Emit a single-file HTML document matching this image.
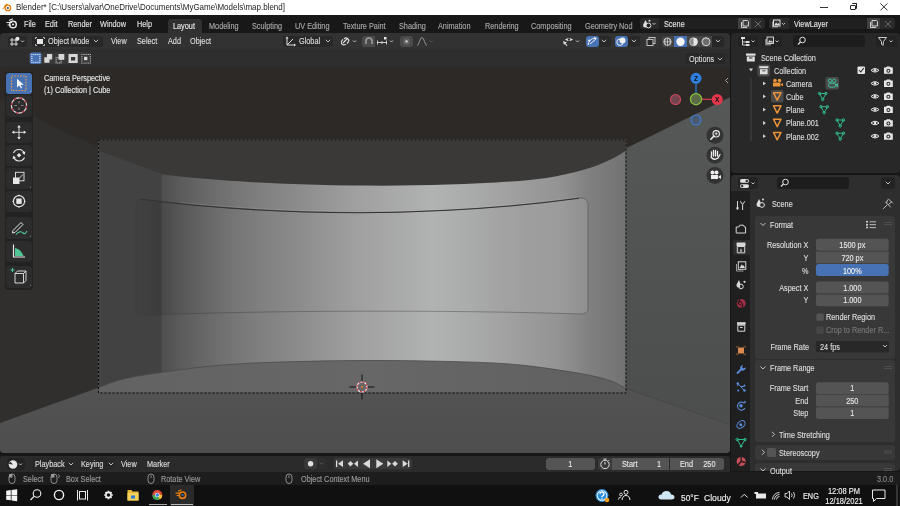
<!DOCTYPE html>
<html><head><meta charset="utf-8">
<style>
*{margin:0;padding:0;box-sizing:border-box}
html,body{width:900px;height:506px;overflow:hidden;background:#161616;font-family:"Liberation Sans",sans-serif;position:relative}
.a{position:absolute}
.t{position:absolute;white-space:nowrap;line-height:1;font-size:7.3px;color:#dcdcdc;-webkit-text-stroke:0.12px currentColor;will-change:transform;transform:translateY(0.5px) scaleY(1.12);transform-origin:0 0.49em}
.c{text-align:center}
.r{text-align:right}
svg{position:absolute;overflow:visible}
</style></head><body>

<!-- title bar -->
<div class="a" style="left:0;top:0;width:900px;height:15px;background:#ffffff"></div>
<!-- top bar -->
<div class="a" style="left:0;top:15px;width:900px;height:18px;background:#181818"></div>

<!-- title bar content -->
<svg style="left:0;top:0" width="15" height="15" viewBox="0 0 15 15">
<path d="M6.6,3.4 L8.6,5.2 L6.4,7.4 L5.4,7.2 L2.4,9.6 L2.1,8.9 L4.6,6.4 L3.6,6.3 Z" fill="#ec8a2a"/>
<circle cx="7.9" cy="7.9" r="2.7" fill="#fff" stroke="#e87d0d" stroke-width="1.3"/>
<circle cx="7.9" cy="7.9" r="1" fill="#3a3a3a"/>
</svg>
<div class="t" style="left:15.6px;top:3.2px;font-size:8px;color:#1a1a1a;-webkit-text-stroke:0">Blender* [C:\Users\alvar\OneDrive\Documents\MyGame\Models\map.blend]</div>
<div class="a" style="left:820px;top:6.5px;width:7.5px;height:1px;background:#333"></div>
<div class="a" style="left:850px;top:4.5px;width:5.5px;height:5.5px;border:1px solid #222;border-radius:1px"></div>
<div class="a" style="left:851.5px;top:3px;width:5.5px;height:5.5px;border-top:1px solid #222;border-right:1px solid #222;border-radius:1px"></div>
<svg style="left:880px;top:3px" width="8" height="8" viewBox="0 0 8 8"><path d="M0.4,0.4 L7.4,7.4 M7.4,0.4 L0.4,7.4" stroke="#222" stroke-width="0.9"/></svg>

<!-- top bar content -->
<svg style="left:6px;top:18px" width="12" height="12" viewBox="0 0 12 12">
<circle cx="7" cy="6.5" r="3.3" fill="none" stroke="#e6e6e6" stroke-width="1.5"/>
<circle cx="7" cy="6.5" r="1.1" fill="#e6e6e6"/>
<path d="M1,4.5 L5.5,4.5 M2,7 L4.5,7 M3.5,2.3 L6.5,1" stroke="#e6e6e6" stroke-width="1.2" stroke-linecap="round"/>
</svg>
<div class="t" style="left:23.5px;top:19.8px;color:#e0e0e0">File</div>
<div class="t" style="left:44.8px;top:19.8px;color:#e0e0e0">Edit</div>
<div class="t" style="left:67.5px;top:19.8px;color:#e0e0e0">Render</div>
<div class="t" style="left:100px;top:19.8px;color:#e0e0e0">Window</div>
<div class="t" style="left:136.5px;top:19.8px;color:#e0e0e0">Help</div>
<div class="a" style="left:168px;top:18.5px;width:34px;height:14.5px;background:#303030;border-radius:3px 3px 0 0"></div>
<div class="t" style="left:173.3px;top:22px;color:#e6e6e6">Layout</div>
<div class="t" style="left:209.3px;top:22px;color:#a8a8a8">Modeling</div>
<div class="t" style="left:252px;top:22px;color:#a8a8a8">Sculpting</div>
<div class="t" style="left:295px;top:22px;color:#a8a8a8">UV Editing</div>
<div class="t" style="left:342.7px;top:22px;color:#a8a8a8">Texture Paint</div>
<div class="t" style="left:398.7px;top:22px;color:#a8a8a8">Shading</div>
<div class="t" style="left:437.5px;top:22px;color:#a8a8a8">Animation</div>
<div class="t" style="left:484.7px;top:22px;color:#a8a8a8">Rendering</div>
<div class="t" style="left:530.8px;top:22px;color:#a8a8a8">Compositing</div>
<div class="t" style="left:584.7px;top:22px;color:#a8a8a8">Geometry Nod</div>
<!-- scene selector -->
<div class="a" style="left:640px;top:18px;width:19px;height:11px;background:#2a2a2a;border-radius:3px 0 0 3px"></div>
<svg style="left:642px;top:18.5px" width="15" height="10" viewBox="0 0 15 10">
<path d="M3.5,1 L1,6 Q1,8.5 3.5,8.5 Q6,8.5 6,6 Z" fill="#e0e0e0"/>
<circle cx="6.5" cy="6.5" r="2.4" fill="#232323" stroke="#e0e0e0" stroke-width="1"/>
<circle cx="7.5" cy="1.8" r="1" fill="#e0e0e0"/>
<path d="M10.5,4 L12,5.5 L13.5,4" fill="none" stroke="#d0d0d0" stroke-width="0.9"/>
</svg>
<div class="a" style="left:659px;top:18px;width:79px;height:11px;background:#202020"></div>
<div class="t" style="left:664px;top:20px;color:#e0e0e0">Scene</div>
<div class="a" style="left:738px;top:18px;width:13px;height:11px;background:#404040"></div>
<svg style="left:740px;top:19px" width="10" height="10" viewBox="0 0 10 10"><path d="M3,1.5 L7.5,1.5 L8.5,2.5 L8.5,7 L3,7 Z M1.5,3 L1.5,8.5 L7,8.5" fill="none" stroke="#cfcfcf" stroke-width="1"/></svg>
<div class="a" style="left:751px;top:18px;width:14px;height:11px;background:#2a2a2a;border-radius:0 3px 3px 0"></div>
<svg style="left:754px;top:20px" width="8" height="8" viewBox="0 0 8 8"><path d="M1,1 L7,7 M7,1 L1,7" stroke="#6a6a6a" stroke-width="1"/></svg>
<!-- view layer -->
<div class="a" style="left:769px;top:18px;width:20px;height:11px;background:#2a2a2a;border-radius:3px 0 0 3px"></div>
<svg style="left:771px;top:18.5px" width="16" height="10" viewBox="0 0 16 10">
<rect x="1" y="2.5" width="6" height="6" fill="#8a8a8a"/>
<rect x="2.5" y="1" width="6.5" height="6" fill="#333" stroke="#e0e0e0" stroke-width="1"/>
<path d="M3.5,6 L5,3.5 L6.5,5 L7.5,4 L8.5,6 Z" fill="#e0e0e0"/>
<path d="M11,4 L12.5,5.5 L14,4" fill="none" stroke="#d0d0d0" stroke-width="0.9"/>
</svg>
<div class="a" style="left:789px;top:18px;width:78px;height:11px;background:#202020"></div>
<div class="t" style="left:794px;top:20px;color:#e0e0e0">ViewLayer</div>
<div class="a" style="left:867px;top:18px;width:13px;height:11px;background:#404040"></div>
<svg style="left:869px;top:19px" width="10" height="10" viewBox="0 0 10 10"><path d="M3,1.5 L7.5,1.5 L8.5,2.5 L8.5,7 L3,7 Z M1.5,3 L1.5,8.5 L7,8.5" fill="none" stroke="#cfcfcf" stroke-width="1"/></svg>
<div class="a" style="left:880px;top:18px;width:15px;height:11px;background:#2a2a2a;border-radius:0 3px 3px 0"></div>
<svg style="left:884px;top:20px" width="8" height="8" viewBox="0 0 8 8"><path d="M1,1 L7,7 M7,1 L1,7" stroke="#6a6a6a" stroke-width="1"/></svg>

<!-- viewport area -->
<div class="a" id="vp" style="left:0;top:33px;width:730px;height:420px;background:#323232;border-radius:4px;overflow:hidden">
</div>

<!-- 3D viewport scene -->
<svg style="left:0;top:0" width="900" height="506" viewBox="0 0 900 506">
<defs>
<clipPath id="vpc"><rect x="0" y="66" width="730" height="387" rx="4"/></clipPath>
<clipPath id="frc"><rect x="99" y="140.5" width="527" height="252.5"/></clipPath>
<linearGradient id="wallg" gradientUnits="userSpaceOnUse" x1="99" y1="0" x2="626" y2="0">
<stop offset="0" stop-color="#444444"/>
<stop offset="0.118" stop-color="#4e4e4e"/>
<stop offset="0.160" stop-color="#5d5d5d"/>
<stop offset="0.214" stop-color="#6b6b6b"/>
<stop offset="0.287" stop-color="#7c7c7c"/>
<stop offset="0.38" stop-color="#8c8c8c"/>
<stop offset="0.476" stop-color="#9e9e9e"/>
<stop offset="0.632" stop-color="#b1b2b2"/>
<stop offset="0.704" stop-color="#aaabab"/>
<stop offset="0.795" stop-color="#9e9e9e"/>
<stop offset="0.875" stop-color="#939393"/>
<stop offset="0.93" stop-color="#808080"/>
<stop offset="1" stop-color="#727272"/>
</linearGradient>
<linearGradient id="pshade" gradientUnits="userSpaceOnUse" x1="136" y1="0" x2="588" y2="0">
<stop offset="0" stop-color="#000" stop-opacity="0.03"/>
<stop offset="0.055" stop-color="#000" stop-opacity="0.08"/>
<stop offset="0.14" stop-color="#000" stop-opacity="0.03"/>
<stop offset="0.2" stop-color="#000" stop-opacity="0"/>
<stop offset="0.8" stop-color="#fff" stop-opacity="0"/>
<stop offset="1" stop-color="#fff" stop-opacity="0.11"/>
</linearGradient>
<linearGradient id="finner" gradientUnits="userSpaceOnUse" x1="99" y1="0" x2="626" y2="0"><stop offset="0" stop-color="#626262"/><stop offset="0.5" stop-color="#676767"/><stop offset="1" stop-color="#606060"/></linearGradient>
<linearGradient id="rwall" gradientUnits="userSpaceOnUse" x1="0" y1="100" x2="0" y2="425">
<stop offset="0" stop-color="#565757"/><stop offset="1" stop-color="#4c4d4d"/>
</linearGradient>
<linearGradient id="floorg" gradientUnits="userSpaceOnUse" x1="0" y1="360" x2="0" y2="453">
<stop offset="0" stop-color="#555555"/><stop offset="1" stop-color="#4e4e4e"/>
</linearGradient>
</defs>
<g clip-path="url(#vpc)">
<rect x="0" y="66" width="730" height="387" fill="#2c2927"/>
<path d="M0,99 C20,108 40,121 60,130 L99,147 L161.5,174.3 L164,380 L98,389 L0,423 Z" fill="#312f2e"/>
<path d="M625.5,148.6 L731,96.8 L731,426 L625.5,388.6 Z" fill="url(#rwall)"/>
<path d="M0,423 L99,387.5 C102.5,386.2 111.3,382.2 120,380 C128.7,377.8 135.7,376.3 151,374 C166.3,371.7 191.7,367.9 212,366 C232.3,364.1 247.5,363.2 273,362.3 C298.5,361.4 334.3,360.6 365,360.5 C395.7,360.4 431.5,361.0 457,361.7 C482.5,362.4 497.7,362.9 518,364.8 C538.3,366.7 563.7,370.7 579,373.3 C594.3,375.9 602.2,378.1 610,380.7 C617.8,383.2 623.3,387.3 626,388.6 L731,425 L731,453 L0,453 Z" fill="url(#floorg)"/>
<path d="M626,388.6 L731,425" stroke="#464646" stroke-width="0.9"/>
<g clip-path="url(#frc)">
<rect x="99" y="140" width="527" height="253" fill="#3a3938"/>
<path d="M99,151 L161.5,174.3 C250,186 420,190 530,180 C575,175 605,165 626,150.5 L626,393 L99,393 Z" fill="url(#wallg)"/>
<path d="M99,151 L161.5,174.3 L161.5,393 L99,393 Z" fill="#424242"/>
<path d="M141,199 C280,217 440,217 579,198 Q588,197 588,205 L588,309 Q588,314 580,314 C460,310 260,310 142,315.5 Q136,315.5 136,309 L136,206 Q136,199 141,199 Z" fill="url(#pshade)"/>
<path d="M99,387.5 C102.5,386.2 111.3,382.2 120,380 C128.7,377.8 135.7,376.3 151,374 C166.3,371.7 191.7,367.9 212,366 C232.3,364.1 247.5,363.2 273,362.3 C298.5,361.4 334.3,360.6 365,360.5 C395.7,360.4 431.5,361.0 457,361.7 C482.5,362.4 497.7,362.9 518,364.8 C538.3,366.7 563.7,370.7 579,373.3 C594.3,375.9 602.2,378.1 610,380.7 C617.8,383.2 623.3,387.3 626,388.6 L626,393 L98,393 Z" fill="url(#finner)"/>
<path d="M99,387.5 C102.5,386.2 111.3,382.2 120,380 C128.7,377.8 135.7,376.3 151,374 C166.3,371.7 191.7,367.9 212,366 C232.3,364.1 247.5,363.2 273,362.3 C298.5,361.4 334.3,360.6 365,360.5 C395.7,360.4 431.5,361.0 457,361.7 C482.5,362.4 497.7,362.9 518,364.8 C538.3,366.7 563.7,370.7 579,373.3 C594.3,375.9 602.2,378.1 610,380.7 C617.8,383.2 623.3,387.3 626,388.6" fill="none" stroke="#4a4a4a" stroke-width="0.8"/>
<!-- panel outline -->
<path d="M141,199 C280,217 440,217 579,198 Q588,197 588,205 L588,309 Q588,314 580,314 C460,310 260,310 142,315.5 Q136,315.5 136,309 L136,206 Q136,199 141,199 Z" fill="none" stroke="#3a3a3a" stroke-width="0.8" opacity="0.5"/>
<path d="M141,199.3 C280,217.3 440,217.3 579,198.3" fill="none" stroke="#333" stroke-width="1.1"/>
<path d="M180,202.5 C300,214.5 440,216 579,197" fill="none" stroke="#d8d8d8" stroke-width="0.6" opacity="0.22"/>
</g>
<!-- camera frame -->
<rect x="98.5" y="140" width="527.5" height="253" fill="none" stroke="#505050" stroke-width="1"/><rect x="98.5" y="140" width="527.5" height="253" fill="none" stroke="#0a0a0a" stroke-width="1" stroke-dasharray="2 2"/>
</g>
</svg>

<!-- 3D view header -->
<div class="a" style="left:0;top:48.5px;width:730px;height:18px;background:#2e2e2e"></div>
<div class="a" style="left:8px;top:35.5px;width:19px;height:11.5px;background:#282828;border-radius:3px"></div>
<svg style="left:9px;top:36px" width="18" height="11" viewBox="0 0 18 11">
<path d="M1,4 L9,4 M1,8 L9,8 M3,2 L3,10 M7,2 L7,10" stroke="#d8d8d8" stroke-width="1"/>
<circle cx="8.5" cy="2.8" r="2" fill="#e8e8e8"/>
<path d="M12,4.5 L13.5,6 L15,4.5" fill="none" stroke="#d0d0d0" stroke-width="0.9"/>
</svg>
<div class="a" style="left:32px;top:35.5px;width:71px;height:11.5px;background:#282828;border-radius:3px"></div>
<svg style="left:34px;top:36px" width="12" height="11" viewBox="0 0 12 11">
<path d="M1.5,3 L1.5,1.5 L3,1.5 M9,1.5 L10.5,1.5 L10.5,3 M10.5,8 L10.5,9.5 L9,9.5 M3,9.5 L1.5,9.5 L1.5,8" fill="none" stroke="#cfcfcf" stroke-width="0.9"/>
<rect x="3" y="3" width="6" height="5" fill="#e6e6e6"/>
</svg>
<div class="t" style="left:47.5px;top:37.2px">Object Mode</div>
<svg style="left:93px;top:39px" width="6" height="4" viewBox="0 0 6 4"><path d="M0.8,0.8 L3,3 L5.2,0.8" fill="none" stroke="#d0d0d0" stroke-width="0.9"/></svg>
<div class="t" style="left:110.7px;top:37.2px">View</div>
<div class="t" style="left:136.8px;top:37.2px">Select</div>
<div class="t" style="left:167.5px;top:37.2px">Add</div>
<div class="t" style="left:190px;top:37.2px">Object</div>

<div class="a" style="left:282.7px;top:35.5px;width:50.5px;height:11.5px;background:#282828;border-radius:3px"></div>
<svg style="left:285px;top:36px" width="12" height="11" viewBox="0 0 12 11">
<path d="M2,9 L2,1.5 M2,9 L10,9 M2,9 L8,3" fill="none" stroke="#e0e0e0" stroke-width="1"/>
<path d="M0.5,2.5 L2,0.5 L3.5,2.5 Z M9,7.5 L11,9 L9,10.5 Z" fill="#e0e0e0"/>
</svg>
<div class="t" style="left:299px;top:37.2px">Global</div>
<svg style="left:325px;top:39px" width="6" height="4" viewBox="0 0 6 4"><path d="M0.8,0.8 L3,3 L5.2,0.8" fill="none" stroke="#d0d0d0" stroke-width="0.9"/></svg>
<svg style="left:339px;top:36px" width="20" height="11" viewBox="0 0 20 11">
<path d="M4,7 L8,3 M5,3 A2.5,2.5 0 0 1 9,6.5 L8,7.5 M7,8 A2.5,2.5 0 0 1 3,4.5 L4,3.5" fill="none" stroke="#e0e0e0" stroke-width="1.1"/>
<path d="M14,4.5 L15.5,6 L17,4.5" fill="none" stroke="#d0d0d0" stroke-width="0.9"/>
</svg>
<div class="a" style="left:362px;top:35.5px;width:13px;height:11.5px;background:#4a4a4a;border-radius:3px 0 0 3px"></div>
<svg style="left:363px;top:36px" width="12" height="11" viewBox="0 0 12 11">
<path d="M3,8 L3,5 A3,3 0 0 1 9,5 L9,8" fill="none" stroke="#9a9a9a" stroke-width="1.6"/>
</svg>
<svg style="left:376px;top:36px" width="22" height="11" viewBox="0 0 22 11">
<path d="M1,6.5 L11,6.5 M1.5,4.5 L1.5,8.5 M10.5,4.5 L10.5,8.5 M6,5 L6,8" fill="none" stroke="#d8d8d8" stroke-width="0.9"/>
<rect x="8" y="1" width="2.5" height="2.5" fill="#e8e8e8"/>
<path d="M14,4.5 L15.5,6 L17,4.5" fill="none" stroke="#d0d0d0" stroke-width="0.9"/>
</svg>
<div class="a" style="left:400px;top:35.5px;width:13px;height:11.5px;background:#4a4a4a;border-radius:3px"></div>
<svg style="left:400px;top:36px" width="13" height="11" viewBox="0 0 13 11"><circle cx="6.5" cy="5.5" r="2.8" fill="none" stroke="#777" stroke-width="0.9"/><circle cx="6.5" cy="5.5" r="1.4" fill="#c0c0c0"/></svg>
<svg style="left:416px;top:36px" width="18" height="11" viewBox="0 0 18 11">
<path d="M1,9.5 C3,9.5 4,1.5 6,1.5 C8,1.5 9,9.5 11,9.5" fill="none" stroke="#a0a0a0" stroke-width="0.9"/>
<path d="M13.5,4.5 L15,6 L16.5,4.5" fill="none" stroke="#5a5a5a" stroke-width="0.9"/>
</svg>

<!-- right header icons -->
<svg style="left:561px;top:36px" width="22" height="11" viewBox="0 0 22 11">
<path d="M4,3.5 Q8,0.5 12,3.5 Q8,6.5 4,3.5 Z" fill="#e6e6e6"/>
<circle cx="8" cy="3.5" r="1.2" fill="#303030"/>
<path d="M2,5 L6,6.5 L4.5,7.2 L6.5,9.5 L5.5,10 L3.8,7.8 L3,9 Z" fill="#e6e6e6"/>
<path d="M15,4.5 L16.5,6 L18,4.5" fill="none" stroke="#d0d0d0" stroke-width="0.9"/>
</svg>
<div class="a" style="left:585.5px;top:35.5px;width:13px;height:11.5px;background:#4772b3;border-radius:3px"></div>
<svg style="left:586px;top:36px" width="22" height="11" viewBox="0 0 22 11">
<path d="M2,9 Q3,3 9,2 M4,8 L10,3" fill="none" stroke="#f0f0f0" stroke-width="1"/>
<path d="M8,1 L11,2 L9,4 Z" fill="#f0f0f0"/>
<circle cx="3" cy="4.5" r="1" fill="#f0f0f0"/>
<path d="M16,4.5 L17.5,6 L19,4.5" fill="none" stroke="#d0d0d0" stroke-width="0.9"/>
</svg>
<div class="a" style="left:599px;top:35.5px;width:12px;height:11.5px;background:#282828;border-radius:0 3px 3px 0"></div>
<svg style="left:601px;top:39px" width="6" height="4" viewBox="0 0 6 4"><path d="M0.8,0.8 L3,3 L5.2,0.8" fill="none" stroke="#d0d0d0" stroke-width="0.9"/></svg>
<div class="a" style="left:615px;top:35.5px;width:12.5px;height:11.5px;background:#4772b3;border-radius:3px"></div>
<svg style="left:615px;top:36px" width="13" height="11" viewBox="0 0 13 11">
<circle cx="5" cy="6.2" r="3.2" fill="none" stroke="#f0f0f0" stroke-width="1"/>
<circle cx="7.5" cy="4.5" r="3" fill="#f0f0f0"/>
</svg>
<div class="a" style="left:628px;top:35.5px;width:12px;height:11.5px;background:#282828;border-radius:0 3px 3px 0"></div>
<svg style="left:631px;top:39px" width="6" height="4" viewBox="0 0 6 4"><path d="M0.8,0.8 L3,3 L5.2,0.8" fill="none" stroke="#d0d0d0" stroke-width="0.9"/></svg>
<div class="a" style="left:645px;top:35.5px;width:11.5px;height:11.5px;background:#363636;border-radius:3px"></div>
<svg style="left:645px;top:36px" width="12" height="11" viewBox="0 0 12 11">
<rect x="4" y="1.5" width="6" height="6" fill="none" stroke="#cfcfcf" stroke-width="0.9"/>
<rect x="2" y="3.5" width="6" height="6" fill="#282828" stroke="#cfcfcf" stroke-width="0.9"/>
</svg>
<div class="a" style="left:661.5px;top:35.5px;width:50px;height:11.5px;background:#444444;border-radius:3px 0 0 3px"></div>
<div class="a" style="left:712px;top:35.5px;width:11.5px;height:11.5px;background:#262626;border-radius:0 3px 3px 0"></div>
<div class="a" style="left:673.5px;top:35.5px;width:13px;height:11.5px;background:#4772b3"></div>
<svg style="left:660.5px;top:35.5px" width="51" height="12" viewBox="0 0 51 12">
<circle cx="6.5" cy="5.75" r="3.7" fill="none" stroke="#e0e0e0" stroke-width="0.8"/>
<path d="M2.8,5.75 L10.2,5.75 M6.5,2 L6.5,9.5 M4.5,2.6 Q3,5.75 4.5,8.9 M8.5,2.6 Q10,5.75 8.5,8.9" fill="none" stroke="#e0e0e0" stroke-width="0.7"/>
<circle cx="19.5" cy="5.75" r="4.2" fill="#f8f8f8"/>
<circle cx="32.5" cy="5.75" r="4" fill="#8a8a8a" stroke="#e6e6e6" stroke-width="0.6"/>
<path d="M32.5,1.75 A4,4 0 0 1 32.5,9.75 Z" fill="#e6e6e6"/>
<circle cx="45" cy="5.75" r="4" fill="#6a6a6a" stroke="#e0e0e0" stroke-width="0.9"/>
<path d="M42.5,8 A3,3 0 0 1 47,3" fill="none" stroke="#bbb" stroke-width="0.8"/>
</svg>
<svg style="left:715px;top:39px" width="6" height="4" viewBox="0 0 6 4"><path d="M0.8,0.8 L3,3 L5.2,0.8" fill="none" stroke="#d0d0d0" stroke-width="0.9"/></svg>

<!-- tool header -->
<svg style="left:0;top:0" width="100" height="70" viewBox="0 0 100 70"><rect x="28.9" y="52.3" width="62.2" height="11.8" rx="2.5" fill="#383838"/><rect x="29.8" y="52.6" width="11.6" height="11.3" rx="2" fill="#4772b3"/><g fill="#e8f0ff"><rect x="31.30" y="54.00" width="1.1" height="1.1"/><rect x="31.30" y="61.80" width="1.1" height="1.1"/><rect x="33.30" y="54.00" width="1.1" height="1.1"/><rect x="33.30" y="61.80" width="1.1" height="1.1"/><rect x="35.30" y="54.00" width="1.1" height="1.1"/><rect x="35.30" y="61.80" width="1.1" height="1.1"/><rect x="37.30" y="54.00" width="1.1" height="1.1"/><rect x="37.30" y="61.80" width="1.1" height="1.1"/><rect x="39.30" y="54.00" width="1.1" height="1.1"/><rect x="39.30" y="61.80" width="1.1" height="1.1"/><rect x="31.30" y="55.95" width="1.1" height="1.1"/><rect x="39.30" y="55.95" width="1.1" height="1.1"/><rect x="31.30" y="57.90" width="1.1" height="1.1"/><rect x="39.30" y="57.90" width="1.1" height="1.1"/><rect x="31.30" y="59.85" width="1.1" height="1.1"/><rect x="39.30" y="59.85" width="1.1" height="1.1"/></g><g fill="#d8d8d8"><path d="M47,54 L52.2,54 L52.2,59.5 L49.5,59.5 L49.5,62.8 L44.3,62.8 L44.3,57.3 L47,57.3 Z"/><rect x="58.5" y="54" width="5.8" height="5.8"/><rect x="55.60" y="57.20" width="1.0" height="1.0"/><rect x="55.60" y="62.40" width="1.0" height="1.0"/><rect x="57.27" y="57.20" width="1.0" height="1.0"/><rect x="57.27" y="62.40" width="1.0" height="1.0"/><rect x="58.93" y="57.20" width="1.0" height="1.0"/><rect x="58.93" y="62.40" width="1.0" height="1.0"/><rect x="60.60" y="57.20" width="1.0" height="1.0"/><rect x="60.60" y="62.40" width="1.0" height="1.0"/><rect x="55.60" y="58.93" width="1.0" height="1.0"/><rect x="60.60" y="58.93" width="1.0" height="1.0"/><rect x="55.60" y="60.67" width="1.0" height="1.0"/><rect x="60.60" y="60.67" width="1.0" height="1.0"/><path d="M68.5,54 L77.7,54 L77.7,63 L68.5,63 Z M71,57 L71,60.5 L75.2,60.5 L75.2,57 Z" fill-rule="evenodd"/><rect x="81.40" y="54.00" width="1.0" height="1.0"/><rect x="81.40" y="62.60" width="1.0" height="1.0"/><rect x="83.50" y="54.00" width="1.0" height="1.0"/><rect x="83.50" y="62.60" width="1.0" height="1.0"/><rect x="85.60" y="54.00" width="1.0" height="1.0"/><rect x="85.60" y="62.60" width="1.0" height="1.0"/><rect x="87.70" y="54.00" width="1.0" height="1.0"/><rect x="87.70" y="62.60" width="1.0" height="1.0"/><rect x="89.80" y="54.00" width="1.0" height="1.0"/><rect x="89.80" y="62.60" width="1.0" height="1.0"/><rect x="81.40" y="56.15" width="1.0" height="1.0"/><rect x="89.80" y="56.15" width="1.0" height="1.0"/><rect x="81.40" y="58.30" width="1.0" height="1.0"/><rect x="89.80" y="58.30" width="1.0" height="1.0"/><rect x="81.40" y="60.45" width="1.0" height="1.0"/><rect x="89.80" y="60.45" width="1.0" height="1.0"/><rect x="84" y="56.8" width="3.4" height="3.4"/></g></svg>
<div class="a" style="left:685px;top:53px;width:40px;height:11px;background:#282828;border-radius:3px"></div>
<div class="t" style="left:689.3px;top:55px">Options</div>
<svg style="left:717px;top:57px" width="6" height="4" viewBox="0 0 6 4"><path d="M0.8,0.8 L3,3 L5.2,0.8" fill="none" stroke="#d0d0d0" stroke-width="0.9"/></svg>


<!-- toolbar -->
<div class="a" style="left:5px;top:71.5px;width:28px;height:218px;background:#222222;border-radius:3px"></div>
<div class="a" style="left:6px;top:72.5px;width:26px;height:21.5px;background:#4772b3;border-radius:3px"></div>
<div class="a" style="left:6px;top:95px;width:26px;height:21.5px;background:#2c2c2c;border-radius:3px"></div>
<div class="a" style="left:6px;top:121.5px;width:26px;height:21.5px;background:#2c2c2c;border-radius:3px"></div>
<div class="a" style="left:6px;top:144.5px;width:26px;height:21.5px;background:#2c2c2c;border-radius:3px"></div>
<div class="a" style="left:6px;top:167.5px;width:26px;height:21.5px;background:#2c2c2c;border-radius:3px"></div>
<div class="a" style="left:6px;top:190.5px;width:26px;height:21.5px;background:#2c2c2c;border-radius:3px"></div>
<div class="a" style="left:6px;top:217px;width:26px;height:21.5px;background:#2c2c2c;border-radius:3px"></div>
<div class="a" style="left:6px;top:240.5px;width:26px;height:21.5px;background:#2c2c2c;border-radius:3px"></div>
<div class="a" style="left:6px;top:266px;width:26px;height:21.5px;background:#2c2c2c;border-radius:3px"></div>
<svg style="left:0;top:0" width="40" height="300" viewBox="0 0 40 300">
<!-- select box -->
<rect x="11.5" y="76" width="14.5" height="14.5" fill="none" stroke="#e89a50" stroke-width="1.1" stroke-dasharray="1.6 1.3"/>
<path d="M17,78.8 L17,87.5 L19.3,85.4 L21,88.6 L22.2,88 L20.7,84.9 L23.8,84.7 Z" fill="#f4f4f4"/>
<path d="M30,92 L31,91 L31,92 Z" fill="#ddd"/>
<!-- cursor -->
<circle cx="19" cy="105.5" r="7.6" fill="none" stroke="#e8e8e8" stroke-width="1.2"/>
<circle cx="19" cy="105.5" r="7.6" fill="none" stroke="#b8283a" stroke-width="1.2" stroke-dasharray="3 2.97"/>
<path d="M19,101 L19,103.5 M19,107.5 L19,110 M14.5,105.5 L17,105.5 M21,105.5 L23.5,105.5" stroke="#888" stroke-width="1"/>
<!-- move -->
<path d="M19,126 L19,138.5 M12.8,132.3 L25.2,132.3" stroke="#e6e6e6" stroke-width="0.9"/>
<path d="M19,125 L17.2,127.5 L20.8,127.5 Z M19,139.5 L17.2,137 L20.8,137 Z M11.8,132.3 L14.3,130.5 L14.3,134.1 Z M26.2,132.3 L23.7,130.5 L23.7,134.1 Z" fill="#e6e6e6"/>
<!-- rotate -->
<path d="M13.5,153 A5.8,5.8 0 0 1 24.3,153.5 M24.5,157.5 A5.8,5.8 0 0 1 13.7,157" fill="none" stroke="#e6e6e6" stroke-width="1.1"/>
<path d="M25.5,151.5 L24.5,155 L22,152.5 Z M12.5,159 L13.5,155.5 L16,158 Z" fill="#e6e6e6"/>
<path d="M19,153 L21.3,155.3 L19,157.6 L16.7,155.3 Z" fill="#e6e6e6"/>
<!-- scale -->
<rect x="13" y="177.5" width="6.5" height="6.5" fill="#e6e6e6"/>
<rect x="15.5" y="172.3" width="8.5" height="8.5" fill="none" stroke="#e6e6e6" stroke-width="0.9"/>
<path d="M19,178.5 L23,174.5" stroke="#e6e6e6" stroke-width="0.9"/>
<path d="M30,187.5 L31,186.5 L31,187.5 Z" fill="#ddd"/>
<!-- transform -->
<circle cx="19" cy="201.2" r="5.6" fill="none" stroke="#e6e6e6" stroke-width="1.1"/>
<rect x="16.3" y="198.5" width="5.4" height="5.4" fill="#e6e6e6"/>
<path d="M19,194.3 L17.8,196 L20.2,196 Z M19,208.1 L17.8,206.4 L20.2,206.4 Z M12.1,201.2 L13.8,200 L13.8,202.4 Z M25.9,201.2 L24.2,200 L24.2,202.4 Z" fill="#e6e6e6"/>
<!-- annotate -->
<path d="M13,230.5 L21,222.5 L23,224.5 L15,232.5 L12.5,233 Z" fill="none" stroke="#e6e6e6" stroke-width="1"/>
<path d="M16,234.5 Q20,230 23,233 Q25,235 27,231" fill="none" stroke="#4fc596" stroke-width="1.1"/>
<path d="M30,236.5 L31,235.5 L31,236.5 Z" fill="#ddd"/>
<!-- measure -->
<path d="M13.5,244.5 L13.5,257 L25,257" fill="none" stroke="#e6e6e6" stroke-width="1.2"/>
<path d="M15,256 L15,248 Q21,249 23.5,256 Z" fill="#4fc596"/>
<!-- add cube -->
<path d="M15,273.5 L23.5,273.5 L23.5,283 L15,283 Z M15,273.5 L17.5,271 L26,271 L26,280.5 L23.5,283 M23.5,273.5 L26,271" fill="none" stroke="#e6e6e6" stroke-width="0.9"/>
<path d="M10.5,270 L14.5,270 M12.5,268 L12.5,272" stroke="#4fc596" stroke-width="1.1"/>
<path d="M30,285.5 L31,284.5 L31,285.5 Z" fill="#ddd"/>
</svg>
<div class="t" style="left:44px;top:73.5px;color:#e6e6e6">Camera Perspective</div>
<div class="t" style="left:44px;top:85.5px;color:#e6e6e6">(1) Collection | Cube</div>

<!-- gizmo -->
<svg style="left:660px;top:66px" width="70" height="130" viewBox="660 66 70 130">
<path d="M696,99.2 L696,78.3" stroke="#2f7fe0" stroke-width="1.2"/>
<path d="M696,99.2 L717.2,99.5" stroke="#e04050" stroke-width="1.2"/>
<circle cx="675.5" cy="99.5" r="5" fill="#74454d" stroke="#d04860" stroke-width="1.1"/>
<circle cx="696" cy="120" r="5" fill="#4a5a70" stroke="#3a80d8" stroke-width="1.1"/>
<circle cx="696" cy="99.2" r="5.6" fill="#5b6b48" stroke="#8bc63a" stroke-width="1.2"/>
<circle cx="696" cy="78.3" r="5.5" fill="#2f7fe0"/>
<circle cx="717.2" cy="99.5" r="5.5" fill="#e2364c"/>
<text x="696" y="80.6" font-family="Liberation Sans" font-size="6.5" font-weight="bold" fill="#111" text-anchor="middle">Z</text>
<text x="717.2" y="101.8" font-family="Liberation Sans" font-size="6.5" font-weight="bold" fill="#111" text-anchor="middle">X</text>
<circle cx="715" cy="135.3" r="8.5" fill="rgba(40,40,40,0.75)"/>
<circle cx="715" cy="155.3" r="8.5" fill="rgba(40,40,40,0.75)"/>
<circle cx="715" cy="175.5" r="8.5" fill="rgba(40,40,40,0.75)"/>
<circle cx="716.2" cy="133.8" r="3.2" fill="none" stroke="#eee" stroke-width="1.1"/>
<path d="M714,136 L710.8,139.2" stroke="#eee" stroke-width="1.6" stroke-linecap="round"/>
<path d="M716.2,132.2 L716.2,135.4 M714.6,133.8 L717.8,133.8" stroke="#eee" stroke-width="0.8"/>
<path d="M711.5,156 L711.5,152 M713.5,156 L713.5,150.5 M715.5,156 L715.5,150.5 M717.5,156 L717.5,151.5 M711,157 Q714,161 718,158 L720,154.5" fill="none" stroke="#eee" stroke-width="1.3" stroke-linecap="round"/>
<circle cx="712.5" cy="172.5" r="2" fill="#eee"/><circle cx="716.5" cy="172.5" r="2" fill="#eee"/>
<rect x="711" y="175" width="7" height="4" fill="#eee"/><path d="M718,177 L721,175 L721,179 Z" fill="#eee"/>
<path d="M728,78 L725.5,80.5 L728,83" fill="none" stroke="#aaa" stroke-width="0.9"/>
</svg>

<!-- 3D cursor -->
<svg style="left:345px;top:370px" width="36" height="36" viewBox="345 370 36 36">
<path d="M362,374.5 L362,382 M362,392 L362,399.5 M349.5,387 L357,387 M367,387 L374.5,387" stroke="#111" stroke-width="1"/>
<circle cx="362" cy="387" r="5" fill="none" stroke="#fff" stroke-width="1.1"/>
<circle cx="362" cy="387" r="5" fill="none" stroke="#d2293a" stroke-width="1.1" stroke-dasharray="2 1.9"/>
<circle cx="362" cy="387" r="1" fill="#e87d0d"/>
</svg>

<!-- timeline header -->
<div class="a" style="left:0;top:456px;width:730px;height:16px;background:#2b2b2b;border-radius:3px 3px 0 0"></div>
<!-- status bar -->
<div class="a" style="left:0;top:472px;width:900px;height:13px;background:#1d1d1d"></div>
<!-- outliner -->
<div class="a" style="left:731px;top:33px;width:169px;height:140px;background:#282828;border-radius:4px"></div>

<!-- outliner content -->
<div class="a" style="left:738px;top:35.5px;width:20px;height:11.5px;background:#232323;border-radius:3px"></div>
<svg style="left:740px;top:36px" width="17" height="11" viewBox="0 0 17 11">
<rect x="1" y="1" width="4" height="2" fill="#e0e0e0"/><path d="M2.5,3 L2.5,9 L5,9 M2.5,6 L5,6" fill="none" stroke="#e0e0e0" stroke-width="0.9"/>
<rect x="5.5" y="5" width="4" height="2" fill="#e0e0e0"/><rect x="5.5" y="8" width="4" height="2" fill="#e0e0e0"/>
<path d="M11.5,4.5 L13,6 L14.5,4.5" fill="none" stroke="#d0d0d0" stroke-width="0.9"/>
</svg>
<div class="a" style="left:762px;top:35.5px;width:20px;height:11.5px;background:#232323;border-radius:3px"></div>
<svg style="left:764px;top:36px" width="17" height="11" viewBox="0 0 17 11">
<rect x="1" y="3" width="6" height="6.5" fill="#7a7a7a"/>
<rect x="3" y="1" width="6.5" height="6.5" fill="#333" stroke="#e0e0e0" stroke-width="0.9"/>
<path d="M4,6.5 L5.5,4 L7,5.5 L8,4.5 L9,6.5 Z" fill="#e0e0e0"/>
<path d="M11.5,4.5 L13,6 L14.5,4.5" fill="none" stroke="#d0d0d0" stroke-width="0.9"/>
</svg>
<div class="a" style="left:793px;top:35px;width:72px;height:12px;background:#1d1d1d;border-radius:3px"></div>
<svg style="left:797px;top:36px" width="10" height="10" viewBox="0 0 10 10"><circle cx="5.5" cy="4" r="2.8" fill="none" stroke="#e0e0e0" stroke-width="1"/><path d="M3.5,6 L1,8.5" stroke="#e0e0e0" stroke-width="1.2"/></svg>
<div class="a" style="left:876px;top:35.5px;width:21px;height:11.5px;background:#232323;border-radius:3px"></div>
<svg style="left:877px;top:36px" width="19" height="11" viewBox="0 0 19 11">
<path d="M1.5,1.5 L9.5,1.5 L6.5,5.5 L6,9.5 L4.5,8 L4.5,5.5 Z" fill="none" stroke="#e0e0e0" stroke-width="0.9"/>
<path d="M12.5,4.5 L14,6 L15.5,4.5" fill="none" stroke="#d0d0d0" stroke-width="0.9"/>
</svg>
<svg style="left:731px;top:50px" width="169" height="95" viewBox="731 50 169 95">
<!-- scene collection icon -->
<rect x="746" y="53.5" width="9.5" height="2.2" fill="#e0e0e0"/>
<path d="M746.8,56.5 L754.8,56.5 L754.8,61.5 L746.8,61.5 Z" fill="#e0e0e0"/><rect x="749" y="57.5" width="3.5" height="1" fill="#282828"/>
<!-- collection -->
<path d="M749,68.5 L753,68.5 L751,71.5 Z" fill="#cfcfcf"/>
<rect x="757.5" y="64.5" width="12.5" height="12" rx="2" fill="#4a4a4a"/>
<rect x="759.3" y="66.2" width="9" height="2" fill="#e0e0e0"/>
<path d="M760,69.2 L767.6,69.2 L767.6,74.3 L760,74.3 Z" fill="#e0e0e0"/><rect x="762.2" y="70.3" width="3.3" height="1" fill="#4a4a4a"/>
<path d="M751,78 L751,141" stroke="#444" stroke-width="1"/>
<!-- checkbox -->
<rect x="857.5" y="66.5" width="7.5" height="7.5" rx="1" fill="#e6e6e6"/>
<path d="M859,70 L860.8,72 L863.8,68" fill="none" stroke="#222" stroke-width="1.1"/>
<!-- row arrows -->
<path d="M763,81.5 L766,83.4 L763,85.3 Z M763,94.5 L766,96.4 L763,98.3 Z M763,107.7 L766,109.6 L763,111.5 Z M763,121 L766,123 L763,125 Z M763,134.3 L766,136.2 L763,138.1 Z" fill="#cfcfcf"/>
<!-- camera icon -->
<circle cx="775" cy="80.5" r="1.8" fill="#e9933a"/><circle cx="779.5" cy="80.5" r="1.8" fill="#e9933a"/>
<rect x="773" y="82.5" width="7.5" height="4" fill="#e9933a"/><path d="M780.5,84.5 L783,83 L783,86.5 Z" fill="#e9933a"/>
<rect x="825.5" y="77" width="13.5" height="12.5" rx="2" fill="#4a4a4a"/>
<g fill="none" stroke="#3ec09a" stroke-width="1"><circle cx="830" cy="80.8" r="1.7"/><circle cx="834.2" cy="80.8" r="1.7"/><rect x="828.8" y="83.3" width="6.6" height="3.8" rx="0.8"/><path d="M835.5,85.2 L837.5,83.8 L837.5,86.8 Z"/></g>
<!-- cube icon with highlight -->
<rect x="771" y="90" width="12.5" height="12.5" rx="2" fill="#4a4a4a"/>
<path d="M773.5,92.8 L781,92.8 L777.2,100.2 Z" fill="none" stroke="#e9933a" stroke-width="1.5" stroke-linejoin="round"/>
<path d="M773.5,105.8 L781,105.8 L777.2,113.2 Z" fill="none" stroke="#e9933a" stroke-width="1.5" stroke-linejoin="round"/>
<path d="M773.5,119.2 L781,119.2 L777.2,126.6 Z" fill="none" stroke="#e9933a" stroke-width="1.5" stroke-linejoin="round"/>
<path d="M773.5,132.4 L781,132.4 L777.2,139.8 Z" fill="none" stroke="#e9933a" stroke-width="1.5" stroke-linejoin="round"/>
<!-- mesh data icons -->
<g fill="none" stroke="#2fb98c" stroke-width="1">
<path d="M819.5,93.5 L826,93.5 L822.7,99.5 Z"/><circle cx="819.5" cy="93.5" r="1.2"/><circle cx="826" cy="93.5" r="1.2"/><circle cx="822.7" cy="99.5" r="1.2"/>
<path d="M821,106.7 L827.5,106.7 L824.2,112.7 Z"/><circle cx="821" cy="106.7" r="1.2"/><circle cx="827.5" cy="106.7" r="1.2"/><circle cx="824.2" cy="112.7" r="1.2"/>
<path d="M837,120 L843.5,120 L840.2,126 Z"/><circle cx="837" cy="120" r="1.2"/><circle cx="843.5" cy="120" r="1.2"/><circle cx="840.2" cy="126" r="1.2"/>
<path d="M837,133.2 L843.5,133.2 L840.2,139.2 Z"/><circle cx="837" cy="133.2" r="1.2"/><circle cx="843.5" cy="133.2" r="1.2"/><circle cx="840.2" cy="139.2" r="1.2"/>
</g>
<!-- eye + camera icons -->
<g id="eyecam">
<path d="M871,70.3 Q875,66.8 879,70.3 Q875,73.8 871,70.3 Z" fill="none" stroke="#e6e6e6" stroke-width="1"/><circle cx="875" cy="70.3" r="1.3" fill="#e6e6e6"/>
<path d="M884,67.5 L886,67.5 L886.8,66.5 L890,66.5 L890.8,67.5 L892.8,67.5 L892.8,73.8 L884,73.8 Z" fill="#e6e6e6"/><circle cx="888.4" cy="70.7" r="2" fill="#282828"/><circle cx="888.4" cy="70.7" r="1" fill="#e6e6e6"/>
<path d="M871,83.4 Q875,79.9 879,83.4 Q875,86.9 871,83.4 Z" fill="none" stroke="#e6e6e6" stroke-width="1"/><circle cx="875" cy="83.4" r="1.3" fill="#e6e6e6"/>
<path d="M884,80.60000000000001 L886,80.60000000000001 L886.8,79.60000000000001 L890,79.60000000000001 L890.8,80.60000000000001 L892.8,80.60000000000001 L892.8,86.9 L884,86.9 Z" fill="#e6e6e6"/><circle cx="888.4" cy="83.80000000000001" r="2" fill="#282828"/><circle cx="888.4" cy="83.80000000000001" r="1" fill="#e6e6e6"/>
<path d="M871,96.4 Q875,92.9 879,96.4 Q875,99.9 871,96.4 Z" fill="none" stroke="#e6e6e6" stroke-width="1"/><circle cx="875" cy="96.4" r="1.3" fill="#e6e6e6"/>
<path d="M884,93.60000000000001 L886,93.60000000000001 L886.8,92.60000000000001 L890,92.60000000000001 L890.8,93.60000000000001 L892.8,93.60000000000001 L892.8,99.9 L884,99.9 Z" fill="#e6e6e6"/><circle cx="888.4" cy="96.80000000000001" r="2" fill="#282828"/><circle cx="888.4" cy="96.80000000000001" r="1" fill="#e6e6e6"/>
<path d="M871,109.6 Q875,106.1 879,109.6 Q875,113.1 871,109.6 Z" fill="none" stroke="#e6e6e6" stroke-width="1"/><circle cx="875" cy="109.6" r="1.3" fill="#e6e6e6"/>
<path d="M884,106.8 L886,106.8 L886.8,105.8 L890,105.8 L890.8,106.8 L892.8,106.8 L892.8,113.1 L884,113.1 Z" fill="#e6e6e6"/><circle cx="888.4" cy="110.0" r="2" fill="#282828"/><circle cx="888.4" cy="110.0" r="1" fill="#e6e6e6"/>
<path d="M871,123 Q875,119.5 879,123 Q875,126.5 871,123 Z" fill="none" stroke="#e6e6e6" stroke-width="1"/><circle cx="875" cy="123" r="1.3" fill="#e6e6e6"/>
<path d="M884,120.2 L886,120.2 L886.8,119.2 L890,119.2 L890.8,120.2 L892.8,120.2 L892.8,126.5 L884,126.5 Z" fill="#e6e6e6"/><circle cx="888.4" cy="123.4" r="2" fill="#282828"/><circle cx="888.4" cy="123.4" r="1" fill="#e6e6e6"/>
<path d="M871,136.2 Q875,132.7 879,136.2 Q875,139.7 871,136.2 Z" fill="none" stroke="#e6e6e6" stroke-width="1"/><circle cx="875" cy="136.2" r="1.3" fill="#e6e6e6"/>
<path d="M884,133.39999999999998 L886,133.39999999999998 L886.8,132.39999999999998 L890,132.39999999999998 L890.8,133.39999999999998 L892.8,133.39999999999998 L892.8,139.7 L884,139.7 Z" fill="#e6e6e6"/><circle cx="888.4" cy="136.6" r="2" fill="#282828"/><circle cx="888.4" cy="136.6" r="1" fill="#e6e6e6"/>
</g>
</svg>
<div class="t" style="left:760.8px;top:53.7px">Scene Collection</div>
<div class="t" style="left:773.9px;top:66.7px">Collection</div>
<div class="t" style="left:786.4px;top:79.8px">Camera</div>
<div class="t" style="left:786.4px;top:92.8px">Cube</div>
<div class="t" style="left:786.4px;top:106px">Plane</div>
<div class="t" style="left:786.4px;top:119.4px">Plane.001</div>
<div class="t" style="left:786.4px;top:132.6px">Plane.002</div>

<!-- properties -->
<div class="a" style="left:731px;top:175px;width:169px;height:296px;background:#2e2e2e;border-radius:4px"></div>

<!-- properties content -->
<div class="a" style="left:738px;top:177px;width:20px;height:11.5px;background:#232323;border-radius:3px"></div>
<svg style="left:739px;top:177.5px" width="18" height="11" viewBox="0 0 18 11">
<rect x="1" y="1" width="9" height="3.8" rx="1.9" fill="#e0e0e0"/><rect x="1" y="6.2" width="9" height="3.8" rx="1.9" fill="#e0e0e0"/>
<circle cx="7.8" cy="2.9" r="1.2" fill="#232323"/><circle cx="3.2" cy="8.1" r="1.2" fill="#232323"/>
<path d="M12.5,4.5 L14,6 L15.5,4.5" fill="none" stroke="#d0d0d0" stroke-width="0.9"/>
</svg>
<div class="a" style="left:777px;top:177px;width:72px;height:11.5px;background:#1d1d1d;border-radius:3px"></div>
<svg style="left:780px;top:177.5px" width="10" height="10" viewBox="0 0 10 10"><circle cx="5.5" cy="4" r="2.8" fill="none" stroke="#e0e0e0" stroke-width="1"/><path d="M3.5,6 L1,8.5" stroke="#e0e0e0" stroke-width="1.2"/></svg>
<div class="a" style="left:881px;top:177px;width:14px;height:11.5px;background:#232323;border-radius:3px"></div>
<svg style="left:885px;top:181px" width="6" height="4" viewBox="0 0 6 4"><path d="M0.8,0.8 L3,3 L5.2,0.8" fill="none" stroke="#d0d0d0" stroke-width="0.9"/></svg>
<!-- tab column -->
<div class="a" style="left:731px;top:191px;width:19px;height:280px;background:#1f1f1f"></div>
<div class="a" style="left:733px;top:239.5px;width:17px;height:15.5px;background:#2e2e2e;border-radius:3px 0 0 3px"></div>
<!-- panels -->
<div class="a" style="left:754.5px;top:216px;width:140px;height:142.5px;background:#383838;border-radius:3px"></div>
<div class="a" style="left:754.5px;top:360px;width:140px;height:82px;background:#383838;border-radius:3px"></div>
<div class="a" style="left:754.5px;top:444.5px;width:140px;height:15px;background:#383838;border-radius:3px"></div>
<div class="a" style="left:754.5px;top:463px;width:140px;height:8px;background:#383838;border-radius:3px 3px 0 0"></div>
<svg style="left:731px;top:191px" width="169" height="280" viewBox="731 191 169 280">
<!-- tab icons -->
<g fill="none" stroke="#d8d8d8" stroke-width="1">
<path d="M737.5,201 L737.5,207"/><path d="M740.3,201.2 L742.6,204.6 L744.9,201.2 M742.6,204.6 L742.6,210"/>
<path d="M736.2,233 L736.2,227 L738.8,227 L739.8,225.2 L743.6,225.2 L744.4,227 L745.6,227 L745.6,233 Z"/>
<path d="M737.3,246.5 L744.7,246.5 L744.7,252.8 L737.3,252.8 Z"/>
<path d="M736.5,271 L736.5,264 M736.5,271 L743.5,271" stroke="#9a9a9a"/>
<rect x="738.3" y="261.8" width="7.5" height="7.5"/>
<circle cx="741" cy="286.5" r="2.3"/>
</g>
<g fill="#d8d8d8">
<path d="M737.5,205.5 Q736.1,207.5 736.3,209 Q737.5,210.4 738.7,209 Q738.9,207.5 737.5,205.5 Z"/>
<rect x="736.5" y="242.5" width="9" height="3.5" rx="0.6"/>
<path d="M739.8,251.5 L741,248.5 L742.2,251.5 Z"/>
<path d="M739.5,268 L741.8,264.2 L743,266 L743.8,265.2 L744.9,268 Z"/>
<path d="M739,280 L736.4,284.8 Q736.4,287.6 739,287.6 Q740,287.6 740.5,287 Q739.3,285.6 740.3,283.5 Z"/>
<circle cx="744.5" cy="281.8" r="1.1"/>
</g>
<circle cx="741.2" cy="303.4" r="4.4" fill="#a03048"/>
<path d="M737.8,301.5 Q740.5,300.5 742,303 Q743.5,305.5 741.8,307.4 M740,299.2 L738.2,303.5 L740.8,305" fill="none" stroke="#2a1418" stroke-width="1.1"/>
<g fill="none" stroke="#d8d8d8" stroke-width="1"><path d="M737.8,325.2 L744.8,325.2 L744.8,331.2 L737.8,331.2 Z"/></g>
<rect x="737" y="322.2" width="8.6" height="2.6" fill="#d8d8d8"/><rect x="740" y="327" width="2.6" height="1" fill="#d8d8d8"/>
<path d="M736.8,348 L736.8,346.3 L738.5,346.3 M743.5,346.3 L745.2,346.3 L745.2,348 M745.2,353 L745.2,354.7 L743.5,354.7 M738.5,354.7 L736.8,354.7 L736.8,353" fill="none" stroke="#8a5a30" stroke-width="0.9"/>
<rect x="738" y="347.5" width="6" height="6" fill="#d88a50"/>
<path d="M737.5,373 L741.5,369" stroke="#5a8ad8" stroke-width="1.8" stroke-linecap="round"/><path d="M740.5,369.5 A3,3 0 0 1 743,365 L742,367.3 L743.6,368.6 L745.8,367.2 A3,3 0 0 1 741.5,370.3 Z" fill="#5a8ad8"/>
<path d="M737.8,383.5 L744.5,390.5 M737.8,383.5 L737.8,386 M740.5,386.5 L744.5,386.5" fill="none" stroke="#5a8ad8" stroke-width="1"/>
<circle cx="737.8" cy="383.5" r="1.3" fill="#5a8ad8"/><circle cx="744.5" cy="390.5" r="1.3" fill="#5a8ad8"/><circle cx="738.2" cy="390.5" r="1.1" fill="#5a8ad8"/><circle cx="744.5" cy="385.5" r="1" fill="#5a8ad8"/>
<path d="M744.5,403.5 A4,4 0 1 0 745,408" fill="none" stroke="#5a8ad8" stroke-width="1.1"/><circle cx="741" cy="405.7" r="1.8" fill="#5a8ad8"/><circle cx="745" cy="402" r="1" fill="#5a8ad8"/>
<ellipse cx="741" cy="424.5" rx="4.6" ry="3.2" fill="none" stroke="#5a8ad8" stroke-width="1.1" transform="rotate(-40 741 424.5)"/><circle cx="740.8" cy="424.8" r="1.5" fill="#5a8ad8"/>
<path d="M737.2,439.5 L745,439.5 L741.1,446.3 Z" fill="none" stroke="#2fb98c" stroke-width="1"/><circle cx="737.2" cy="439.5" r="1.3" fill="none" stroke="#2fb98c" stroke-width="0.9"/><circle cx="745" cy="439.5" r="1.3" fill="none" stroke="#2fb98c" stroke-width="0.9"/><circle cx="741.1" cy="446.3" r="1.2" fill="#2fb98c"/>
<circle cx="741.2" cy="461.5" r="4.6" fill="#c05058"/><path d="M741.2,457 L741.2,461.5 L745.5,462.5 M741.2,461.5 L738,465" fill="none" stroke="#2a1418" stroke-width="1.3"/>
<!-- scene row icon -->
<path d="M759,199 L756.5,204 Q756.5,207 759,207 Q761.5,207 761.5,204 Z" fill="#e0e0e0"/><circle cx="762" cy="205" r="2.4" fill="#2e2e2e" stroke="#e0e0e0" stroke-width="1"/><circle cx="763" cy="199.5" r="1" fill="#e0e0e0"/>
<path d="M883.5,208.5 L887,205 M885.5,202 L890.5,207 M888.5,199 L892.5,203 M887.5,200 L886.5,203 M891.5,202 L888.5,204.5" fill="none" stroke="#c0c0c0" stroke-width="1" stroke-linecap="round"/>
<!-- format header -->
<path d="M760.5,223 L763,225.5 L765.5,223" fill="none" stroke="#d0d0d0" stroke-width="0.9"/>
<path d="M760.5,366.5 L763,369 L765.5,366.5" fill="none" stroke="#d0d0d0" stroke-width="0.9"/>
<g fill="#e0e0e0"><circle cx="867" cy="221.8" r="1"/><circle cx="867" cy="224.7" r="1"/><circle cx="867" cy="227.6" r="1"/></g>
<path d="M869.5,221.8 L876,221.8 M869.5,224.7 L876,224.7 M869.5,227.6 L876,227.6" stroke="#e0e0e0" stroke-width="0.8"/>
<g fill="#555"><rect x="884" y="222" width="8" height="0.8"/><rect x="884" y="224" width="8" height="0.8"/><rect x="884" y="366" width="8" height="0.8"/><rect x="884" y="368" width="8" height="0.8"/><rect x="884" y="450.5" width="8" height="0.8"/><rect x="884" y="452.5" width="8" height="0.8"/><rect x="884" y="468" width="8" height="0.8"/><rect x="884" y="470" width="8" height="0.8"/></g>
<!-- fields -->
<rect x="816" y="238.7" width="72.7" height="12" rx="2.5" fill="#545454"/>
<rect x="816" y="251.4" width="72.7" height="12" rx="0" fill="#545454"/>
<rect x="816" y="264" width="72.7" height="12" rx="2.5" fill="#4772b3"/>
<rect x="816" y="251" width="72.7" height="1" fill="#454545"/>
<rect x="816" y="281.5" width="72.7" height="12" rx="2.5" fill="#545454"/>
<rect x="816" y="294.2" width="72.7" height="12" rx="2.5" fill="#545454"/>
<rect x="816" y="293.8" width="72.7" height="1" fill="#454545"/>
<rect x="816.4" y="313.4" width="7.4" height="7.4" rx="1.5" fill="#545454"/>
<rect x="816.4" y="326.5" width="7.4" height="7.4" rx="1.5" fill="#464646"/>
<rect x="815.7" y="341" width="73.3" height="11.3" rx="2.5" fill="#282828"/>
<path d="M883,345 L885,347 L887,345" fill="none" stroke="#d0d0d0" stroke-width="0.9"/>
<rect x="816" y="382.2" width="72.7" height="12" rx="2.5" fill="#545454"/>
<rect x="816" y="394.5" width="72.7" height="12" fill="#545454"/>
<rect x="816" y="407" width="72.7" height="12" rx="2.5" fill="#545454"/>
<rect x="816" y="394.2" width="72.7" height="0.8" fill="#454545"/><rect x="816" y="406.6" width="72.7" height="0.8" fill="#454545"/>
<path d="M772,431.8 L774.5,434.3 L772,436.8" fill="none" stroke="#d0d0d0" stroke-width="0.9"/>
<path d="M762,449.8 L764.5,452.3 L762,454.8" fill="none" stroke="#d0d0d0" stroke-width="0.9"/>
<rect x="767" y="448" width="9" height="9" rx="1.5" fill="#545454"/>
<path d="M760.5,468.5 L763,471 L765.5,468.5" fill="none" stroke="#d0d0d0" stroke-width="0.9"/>
</svg>
<div class="t" style="left:772px;top:199.5px">Scene</div>
<div class="t" style="left:769.7px;top:221px">Format</div>
<div class="t r" style="left:740px;width:68.4px;top:241.2px">Resolution X</div>
<div class="t r" style="left:740px;width:68.4px;top:253.6px">Y</div>
<div class="t r" style="left:740px;width:68.4px;top:266.5px">%</div>
<div class="t c" style="left:816px;width:72.7px;top:241.2px;color:#e6e6e6">1500 px</div>
<div class="t c" style="left:816px;width:72.7px;top:253.6px;color:#e6e6e6">720 px</div>
<div class="t c" style="left:816px;width:72.7px;top:266.5px;color:#f0f0f0">100%</div>
<div class="t r" style="left:740px;width:68.4px;top:283.8px">Aspect X</div>
<div class="t r" style="left:740px;width:68.4px;top:296.3px">Y</div>
<div class="t c" style="left:816px;width:72.7px;top:283.8px;color:#e6e6e6">1.000</div>
<div class="t c" style="left:816px;width:72.7px;top:296.3px;color:#e6e6e6">1.000</div>
<div class="t" style="left:826.4px;top:313.2px">Render Region</div>
<div class="t" style="left:826.4px;top:326.4px;color:#777">Crop to Render R...</div>
<div class="t r" style="left:740px;width:69px;top:342.7px">Frame Rate</div>
<div class="t" style="left:820px;top:342.7px">24 fps</div>
<div class="t" style="left:769.6px;top:364.4px">Frame Range</div>
<div class="t r" style="left:740px;width:68.3px;top:384.4px">Frame Start</div>
<div class="t r" style="left:740px;width:68.3px;top:396.8px">End</div>
<div class="t r" style="left:740px;width:68.3px;top:409.2px">Step</div>
<div class="t c" style="left:816px;width:72.7px;top:384.4px;color:#e6e6e6">1</div>
<div class="t c" style="left:816px;width:72.7px;top:396.8px;color:#e6e6e6">250</div>
<div class="t c" style="left:816px;width:72.7px;top:409.2px;color:#e6e6e6">1</div>
<div class="t" style="left:778.7px;top:431.1px">Time Stretching</div>
<div class="t" style="left:778.7px;top:448.9px">Stereoscopy</div>
<div class="t" style="left:769.6px;top:467px">Output</div>


<!-- timeline content -->
<div class="a" style="left:6.5px;top:458px;width:18.5px;height:11.5px;background:#232323;border-radius:3px"></div>
<svg style="left:7px;top:458.5px" width="18" height="11" viewBox="0 0 18 11">
<circle cx="6" cy="5.5" r="4.3" fill="#e6e6e6"/>
<path d="M6,5.5 L3,2.5 L2,5 Z" fill="#232323"/>
<path d="M12,4.5 L13.5,6 L15,4.5" fill="none" stroke="#d0d0d0" stroke-width="0.9"/>
</svg>
<div class="a" style="left:32px;top:458px;width:42.7px;height:11.5px;background:#282828;border-radius:3px 0 0 3px"></div>
<div class="a" style="left:75.5px;top:458px;width:39.2px;height:11.5px;background:#282828;border-radius:0 3px 3px 0"></div>
<div class="t" style="left:35px;top:460.2px">Playback</div>
<svg style="left:68px;top:462.3px" width="6" height="4" viewBox="0 0 6 4"><path d="M0.8,0.8 L3,3 L5.2,0.8" fill="none" stroke="#d0d0d0" stroke-width="0.9"/></svg>
<div class="t" style="left:80.5px;top:460.2px">Keying</div>
<svg style="left:108px;top:462.3px" width="6" height="4" viewBox="0 0 6 4"><path d="M0.8,0.8 L3,3 L5.2,0.8" fill="none" stroke="#d0d0d0" stroke-width="0.9"/></svg>
<div class="t" style="left:120.5px;top:460.2px">View</div>
<div class="t" style="left:146.7px;top:460.2px">Marker</div>
<!-- playback controls -->
<svg style="left:300px;top:456px" width="120" height="16" viewBox="300 456 120 16">
<rect x="304.5" y="458" width="22.5" height="11.3" rx="2.5" fill="#2e2e2e"/>
<rect x="304.5" y="458" width="12.2" height="11.3" rx="2.5" fill="#3a3a3a"/>
<circle cx="310.6" cy="463.7" r="2.7" fill="#e0e0e0"/>
<path d="M320,462.8 L321.5,464.3 L323,462.8" fill="none" stroke="#5a5a5a" stroke-width="0.9"/>
<rect x="334" y="458" width="77.7" height="11.3" rx="2.5" fill="#3a3a3a"/>
<g fill="#363636"><rect x="346" y="458" width="0.7" height="11.3"/><rect x="360" y="458" width="0.7" height="11.3"/><rect x="373" y="458" width="0.7" height="11.3"/><rect x="386" y="458" width="0.7" height="11.3"/><rect x="400" y="458" width="0.7" height="11.3"/></g>
<g fill="#dadada">
<rect x="336" y="460.5" width="1.3" height="6.5"/><path d="M343,460.3 L338,463.7 L343,467.1 Z"/>
<path d="M347.7,463.7 L350.5,460.9 L353.3,463.7 L350.5,466.5 Z"/><path d="M358,460.5 L354,463.7 L358,466.9 Z"/>
<path d="M370,459.3 L363,463.8 L370,468.3 Z"/>
<path d="M376.3,459.3 L383.3,463.8 L376.3,468.3 Z"/>
<path d="M387.3,460.5 L391.3,463.7 L387.3,466.9 Z"/><path d="M392.2,463.7 L395,460.9 L397.8,463.7 L395,466.5 Z"/>
<path d="M402.7,460.3 L407.7,463.7 L402.7,467.1 Z"/><rect x="408" y="460.5" width="1.3" height="6.5"/>
</g>
</svg>
<div class="a" style="left:546px;top:458px;width:48.7px;height:11.5px;background:#545454;border-radius:3px"></div>
<div class="t c" style="left:546px;width:48.7px;top:460.2px;color:#e6e6e6">1</div>
<div class="a" style="left:598px;top:458px;width:14px;height:11.5px;background:#3a3a3a;border-radius:3px 0 0 3px"></div>
<svg style="left:598px;top:458px" width="14" height="12" viewBox="0 0 14 12">
<circle cx="7" cy="6.5" r="4.2" fill="none" stroke="#e0e0e0" stroke-width="1"/>
<path d="M7,6.5 L7,4 M5.5,1 L8.5,1 M10.5,2.8 L11.3,2" stroke="#e0e0e0" stroke-width="1"/>
</svg>
<div class="a" style="left:612px;top:458px;width:57px;height:11.5px;background:#545454"></div>
<div class="a" style="left:669.5px;top:458px;width:54.3px;height:11.5px;background:#545454;border-radius:0 3px 3px 0"></div>
<div class="t" style="left:622px;top:460.2px;color:#e6e6e6">Start</div>
<div class="t r" style="left:640px;width:21px;top:460.2px;color:#e6e6e6">1</div>
<div class="t" style="left:679.5px;top:460.2px;color:#e6e6e6">End</div>
<div class="t r" style="left:690px;width:25.5px;top:460.2px;color:#e6e6e6">250</div>

<!-- status bar content -->
<svg style="left:0;top:472px" width="900" height="13" viewBox="0 472 900 13">
<g fill="none" stroke="#9a9a9a" stroke-width="0.9">
<rect x="9" y="474" width="6" height="9.5" rx="3"/><path d="M12,474 L12,477.5"/>
<rect x="51" y="474" width="6" height="9.5" rx="3"/><path d="M54,474 L54,477.5 M58.5,474.5 Q60.5,476 58.5,478"/>
<rect x="148" y="474" width="6" height="9.5" rx="3"/><path d="M151,475.5 L151,478"/>
<rect x="286" y="474" width="6" height="9.5" rx="3"/><path d="M289,475.5 L289,478"/>
</g>
<rect x="9" y="474" width="3" height="3.5" fill="#9a9a9a"/>
<rect x="51" y="474" width="3" height="3.5" fill="#9a9a9a"/>
</svg>
<div class="t" style="left:22.7px;top:474.5px;color:#9a9a9a">Select</div>
<div class="t" style="left:66px;top:474.5px;color:#9a9a9a">Box Select</div>
<div class="t" style="left:161px;top:474.5px;color:#9a9a9a">Rotate View</div>
<div class="t" style="left:300.5px;top:474.5px;color:#9a9a9a">Object Context Menu</div>
<div class="t" style="left:877px;top:474.5px;color:#8a8a8a">3.0.0</div>

<!-- taskbar -->
<div class="a" style="left:0;top:485px;width:900px;height:21px;background:#101010"></div>


<!-- taskbar content -->
<div class="a" style="left:170px;top:485px;width:23.5px;height:21px;background:#2a2a2a"></div>
<div class="a" style="left:149px;top:503.5px;width:18px;height:1.5px;background:#a8a8a8"></div>
<div class="a" style="left:171px;top:503.5px;width:21.5px;height:1.5px;background:#b8b8b8"></div>
<svg style="left:0;top:485px" width="900" height="21" viewBox="0 485 900 21">
<g fill="#f4f4f4">
<path d="M6.2,490.8 L10.8,490.1 L10.8,494.9 L6.2,494.9 Z M11.5,490 L17.2,489.2 L17.2,494.9 L11.5,494.9 Z M6.2,495.6 L10.8,495.6 L10.8,500.3 L6.2,499.7 Z M11.5,495.6 L17.2,495.6 L17.2,501.2 L11.5,500.4 Z"/>
</g>
<circle cx="37" cy="493.5" r="3.8" fill="none" stroke="#f0f0f0" stroke-width="1.1"/>
<path d="M34.3,496.2 L30.5,500" stroke="#f0f0f0" stroke-width="1.2"/>
<circle cx="59" cy="495" r="4.6" fill="none" stroke="#f4f4f4" stroke-width="1.4"/>
<path d="M77.5,490 L77.5,500.5 M87.5,490 L87.5,500.5" stroke="#e8e8e8" stroke-width="1"/>
<rect x="79.5" y="491.5" width="6" height="7.5" fill="none" stroke="#e8e8e8" stroke-width="1"/>
<g transform="translate(108.5 495)"><circle r="2.6" fill="none" stroke="#f0f0f0" stroke-width="1.6"/>
<path d="M0,-4.3 L0,-3 M0,3 L0,4.3 M-4.3,0 L-3,0 M3,0 L4.3,0 M-3,-3 L-2.1,-2.1 M3,3 L2.1,2.1 M-3,3 L-2.1,2.1 M3,-3 L2.1,-2.1" stroke="#f0f0f0" stroke-width="1.6"/></g>
<path d="M127.5,490 L131.5,490 L132.5,491.5 L138.5,491.5 L138.5,500.5 L127.5,500.5 Z" fill="#e8b83a"/>
<rect x="127.5" y="493" width="11" height="7.5" fill="#f4cf5a"/>
<rect x="131" y="495.5" width="4" height="3" fill="#2a7ad8"/>
<circle cx="157.3" cy="495" r="5" fill="#e04a3a"/>
<path d="M157.3,495 L152.9,497.5 A5,5 0 0 0 159.8,499.3 Z" fill="#3aa655"/>
<path d="M157.3,495 L159.8,499.3 A5,5 0 0 0 162.3,495 Z" fill="#f4c430"/>
<path d="M152.3,495 A5,5 0 0 0 155,499.4 L157.3,495 Z" fill="#3aa655"/>
<circle cx="157.3" cy="495" r="2.3" fill="#fff"/><circle cx="157.3" cy="495" r="1.7" fill="#3b7ce0"/>
<circle cx="182.5" cy="495.2" r="3.2" fill="none" stroke="#e87d0d" stroke-width="1.6"/>
<circle cx="182.5" cy="495.2" r="1.1" fill="#3b6ea8"/>
<path d="M176,493.2 L180,493.2 M177,495.5 L179.5,495.5 M178.5,491 L181,490" stroke="#e87d0d" stroke-width="1.2" stroke-linecap="round"/>
<!-- right -->
<circle cx="602" cy="495.5" r="6.5" fill="#2d8fe0"/>
<circle cx="602" cy="495.5" r="5.2" fill="#fff"/>
<circle cx="602" cy="495.5" r="4.4" fill="#2d8fe0"/>
<path d="M600,494 Q600,492 602,492 Q604,492 604,494 Q604,495.3 602,496.3 L602,497.3" fill="none" stroke="#fff" stroke-width="1.3"/>
<circle cx="602" cy="499" r="0.8" fill="#fff"/>
<circle cx="607" cy="500" r="2.3" fill="#f4a020"/>
<circle cx="626" cy="492.3" r="2" fill="none" stroke="#e8e8e8" stroke-width="1"/>
<path d="M622,500 Q622.5,495.5 626,495.5 Q629.5,495.5 630,500" fill="none" stroke="#e8e8e8" stroke-width="1"/>
<circle cx="621" cy="494.5" r="1.4" fill="none" stroke="#e8e8e8" stroke-width="0.9"/>
<path d="M618.5,499.5 Q618.5,497 621,497" fill="none" stroke="#e8e8e8" stroke-width="0.9"/>
<path d="M661.5,499.5 Q658.5,499.5 658.5,497 Q658.5,494.5 661.5,494.5 Q662.5,491 666.5,491 Q670.5,491 671,494.5 Q674.5,494.5 674.5,497 Q674.5,499.5 671.5,499.5 Z" fill="#cfe6f4"/>
<path d="M741,497.5 L744.3,494.2 L747.6,497.5" fill="none" stroke="#e8e8e8" stroke-width="1"/>
<rect x="756" y="493.5" width="10" height="5" fill="#e8e8e8"/><rect x="754.5" y="492" width="3.5" height="2" fill="#e8e8e8"/>
<path d="M772.5,499.5 A7,7 0 0 1 779.5,492.5 M774.5,499.5 A5,5 0 0 1 779.5,494.5 M776.5,499.5 A3,3 0 0 1 779.5,496.5" fill="none" stroke="#e8e8e8" stroke-width="0.9"/>
<path d="M785,493.5 L787,493.5 L789.5,491 L789.5,499.5 L787,497 L785,497 Z" fill="none" stroke="#e8e8e8" stroke-width="0.9"/>
<path d="M791.5,493.5 Q792.8,495.3 791.5,497 M793.5,492 Q795.8,495.3 793.5,498.5" fill="none" stroke="#e8e8e8" stroke-width="0.9"/>
<path d="M872.5,490 L885,490 L885,498.5 L876.5,498.5 L873.5,501.5 L873.5,498.5 L872.5,498.5 Z" fill="none" stroke="#e8e8e8" stroke-width="1"/>
<rect x="896.5" y="485" width="1" height="21" fill="#5a5a5a"/>
</svg>
<div class="t" style="left:680.6px;top:492.5px;font-size:8.4px;color:#f0f0f0">50°F</div>
<div class="t" style="left:704px;top:492.5px;font-size:8.6px;color:#f0f0f0">Cloudy</div>
<div class="t" style="left:803px;top:491.5px;font-size:7.3px;color:#f0f0f0">ENG</div>
<div class="t c" style="left:822px;width:44px;top:487px;font-size:7.5px;color:#f0f0f0">12:08 PM</div>
<div class="t c" style="left:822px;width:44px;top:497px;font-size:7.5px;color:#f0f0f0">12/18/2021</div>

</body></html>
